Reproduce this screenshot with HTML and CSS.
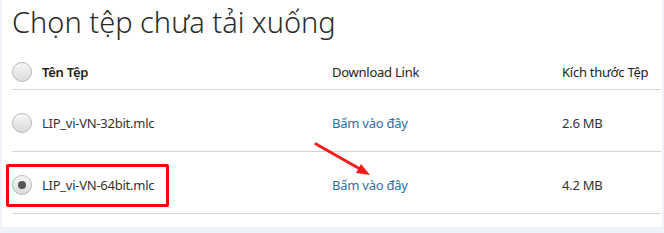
FILE: index.html
```html
<!DOCTYPE html>
<html lang="vi">
<head>
  <meta charset="UTF-8">
  <title>Chọn tệp chưa tải xuống</title>
  <link rel="stylesheet" href="styles.css">
</head>
<body>
  <div class="panel">
    <h1 class="title">Chọn tệp chưa tải xuống</h1>

    <div class="table">
      <div class="row head">
        <div class="cell name"><span class="radio"></span>Tên Tệp</div>
        <div class="cell link">Download Link</div>
        <div class="cell size">Kích thước Tệp</div>
      </div>

      <div class="row">
        <div class="cell name"><span class="radio"></span>LIP_vi-VN-32bit.mlc</div>
        <div class="cell link"><a href="#">Bấm vào đây</a></div>
        <div class="cell size">2.6 MB</div>
      </div>

      <div class="row">
        <div class="cell name">
          <span class="radio checked"></span>LIP_vi-VN-64bit.mlc
          <span class="highlight"></span>
        </div>
        <div class="cell link"><a href="#">Bấm vào đây</a></div>
        <div class="cell size">4.2 MB</div>
      </div>
    </div>

    <svg class="arrow" width="70" height="40" viewBox="0 0 70 40">
      <line x1="2" y1="2" x2="46" y2="27" stroke="#f21b1b" stroke-width="3" stroke-linecap="round"/>
      <polygon points="56,33 42,31 47,22" fill="#f21b1b"/>
    </svg>
  </div>
</body>
</html>
```

FILE: styles.css
```css
body {
  margin: 0;
  background: #eef3f9;
  font-family: 'Noto Sans', 'Open Sans', sans-serif;
  color: #333;
}

.panel {
  position: relative;
  margin: 0 2px;
  height: 227px;
  background: #fff;
  padding: 0 1px 0 10px;
  box-sizing: border-box;
}

.title {
  margin: 0;
  padding-top: 2px;
  height: 52px;
  font-size: 29px;
  font-weight: 300;
  line-height: 40px;
  color: #2b2b2b;
}

.row {
  display: flex;
  align-items: center;
  height: 61px;
  padding-top: 4px;
  box-sizing: border-box;
  height: 62px;
  border-bottom: 1px solid #d4d4d4;
  font-size: 13px;
  letter-spacing: -0.25px;
}

.row.head {
  height: 36px;
  padding-top: 0;
}

.head .cell {
  font-weight: 600;
  color: #222;
}

.head .link,
.head .size {
  font-weight: 400;
}

.cell {
  display: flex;
  align-items: center;
  position: relative;
}

.name {
  width: 320px;
}

.link {
  width: 230px;
}

.link a {
  color: #2e6da4;
  text-decoration: none;
}

.radio {
  width: 18px;
  height: 18px;
  border: 1px solid #b8b8b8;
  border-radius: 50%;
  background: linear-gradient(#f7f7f7, #dadada);
  margin-right: 10px;
  display: flex;
  align-items: center;
  justify-content: center;
}

.radio.checked::after {
  content: '';
  width: 8px;
  height: 8px;
  border-radius: 50%;
  background: #555;
}

.highlight {
  position: absolute;
  left: -6px;
  top: -11px;
  width: 157px;
  height: 37px;
  border: 3px solid #f00;
  border-radius: 2px;
}

.arrow {
  position: absolute;
  left: 312px;
  top: 142px;
}
```
